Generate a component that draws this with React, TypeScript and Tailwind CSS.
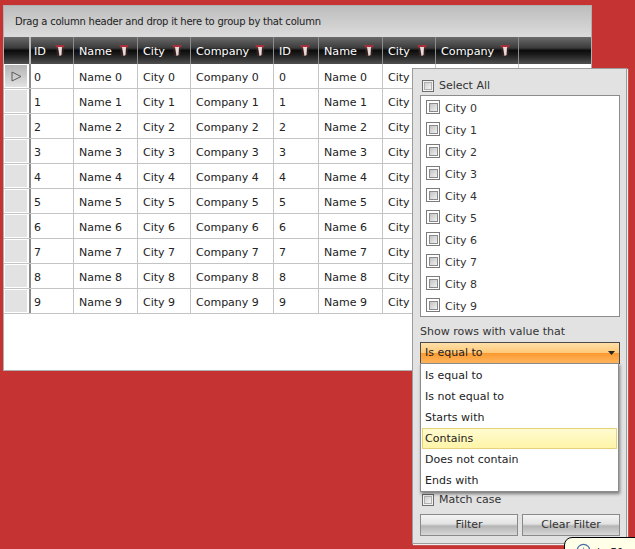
import { Info } from 'lucide-react'

const columns = [
  { title: 'ID', width: 'w-[43px]', pad: 'pl-[3px]', prefix: '' },
  { title: 'Name', width: 'w-[64px]', pad: 'pl-[5px]', prefix: 'Name ' },
  { title: 'City', width: 'w-[53px]', pad: 'pl-[5px]', prefix: 'City ' },
  { title: 'Company', width: 'w-[83px]', pad: 'pl-[5px]', prefix: 'Company ' },
  { title: 'ID', width: 'w-[45px]', pad: 'pl-[5px]', prefix: '' },
  { title: 'Name', width: 'w-[64px]', pad: 'pl-[5px]', prefix: 'Name ' },
  { title: 'City', width: 'w-[53px]', pad: 'pl-[5px]', prefix: 'City ' },
  { title: 'Company', width: 'w-[83px]', pad: 'pl-[5px]', prefix: 'Company ' },
]

const rows = [0, 1, 2, 3, 4, 5, 6, 7, 8, 9]
const operators = ['Is equal to', 'Is not equal to', 'Starts with', 'Contains', 'Does not contain', 'Ends with']

function FilterIcon() {
  return (
    <svg width="14" height="16" viewBox="0 0 14 16" className="shrink-0">
      <path d="M2 2 L12 2 L10 5 L4 5 Z" fill="#a8303c" />
      <path d="M3 5 L11 5 L10 13 L4 13 Z" fill="#5a2a2e" opacity="0.45" />
      <path d="M5 4 L9 4 L8.5 12 L6.5 13 Z" fill="#e6dcd8" />
    </svg>
  )
}

function Check() {
  return (
    <span className="flex h-[12px] w-[12px] shrink-0 items-center justify-center border border-[#6e6e6e] bg-[#f2f2f2]">
      <span className="h-[8px] w-[8px] border border-[#b0b0b0] bg-gradient-to-br from-[#cfcfcf] to-[#f4f4f4]" />
    </span>
  )
}

function ListCheck() {
  return (
    <span className="-mt-[2px] flex h-[14px] w-[14px] shrink-0 items-center justify-center border border-[#7a7a7a] bg-white">
      <span className="h-[9px] w-[9px] border border-[#8a8a8a] bg-gradient-to-br from-[#c4c4c4] to-[#f0f0f0]" />
    </span>
  )
}

function GradButton({ label }: { label: string }) {
  return (
    <div className="flex h-[22px] w-[98px] items-center justify-center border border-[#8a8a8a] bg-[linear-gradient(#f4f4f4_0%,#e2e2e2_45%,#b4b4b4_55%,#d8d8d8_100%)] text-[#333]">
      {label}
    </div>
  )
}

export default function App() {
  return (
    <div className="relative h-[549px] w-[635px] overflow-hidden bg-[#c53333] text-[11px] text-[#222] [font-family:'DejaVu_Sans',sans-serif]">
      <div className="ml-[3px] mt-[5px] flex h-[366px] w-[589px] flex-col border border-[#b0b0b0] bg-white">
        <div className="flex h-[31px] items-center bg-[linear-gradient(#bdbdbd,#dcdcdc)] pl-[11px] text-[10px] tracking-[-0.23px] text-[#222]">
          Drag a column header and drop it here to group by that column
        </div>

        <div className="flex h-[27px] bg-[linear-gradient(#6a6a6a_0%,#3c3c3c_40%,#0c0c0c_50%,#1c1c1c_65%,#505050_100%)] text-white">
          <div className="w-[27px] shrink-0 border-r-2 border-[#b8b8b8]" />
          {columns.map((col, i) => (
            <div key={i} className={`flex ${col.width} ${col.pad} shrink-0 items-center justify-between border-r border-[#8c8c8c] pr-[6px]`}>
              <span className="pt-[3px] text-[11.2px]">{col.title}</span>
              <FilterIcon />
            </div>
          ))}
        </div>

        {rows.map((n) => (
          <div key={n} className="flex h-[25px] border-b border-[#c4c4c4]">
            <div className="w-[27px] shrink-0 border-r-2 border-[#8c8c8c] pr-[1px]">
              <div className={`flex h-full items-center justify-center border border-white ${n === 0 ? 'bg-[linear-gradient(#b4b4b4,#e2e2e2)]' : 'bg-[#e2e2e2]'}`}>
                {n === 0 && (
                  <svg width="11" height="11" viewBox="0 0 11 11">
                    <path d="M1 1 L10 5.5 L1 10 Z" fill="none" stroke="#5a5a5a" />
                  </svg>
                )}
              </div>
            </div>
            {columns.map((col, i) => (
              <div key={i} className={`flex ${col.width} ${col.pad} shrink-0 items-center border-r border-[#c4c4c4] pt-[5px]`}>
                {col.prefix}
                {n}
              </div>
            ))}
          </div>
        ))}
      </div>

      {/* Filter popup */}
      <div className="absolute left-[412px] top-[68px] flex h-[476px] w-[215px] flex-col border border-[#9c9c9c] bg-[#e2e2e2] pl-[7px] pr-[6px] pt-[8px] text-[#333] shadow-[1px_1px_1px_#eee]">
        <div className="flex h-[17px] items-center gap-[5px] pl-[2px]">
          <Check />
          <span className="pt-[2px]">Select All</span>
        </div>
        <div className="mt-[1px] flex h-[222px] flex-col border border-[#8c8c8c] bg-white pl-[5px] pt-[1px]">
          {rows.map((n) => (
            <div key={n} className="flex h-[22px] shrink-0 items-center gap-[5px]">
              <ListCheck />
              <span className="pt-[2px]">City {n}</span>
            </div>
          ))}
        </div>
        <div className="mt-[6px] h-[17px] leading-[17px]">Show rows with value that</div>
        <div className="mt-[2px] flex h-[22px] items-center justify-between border border-[#4a4a4a] bg-[linear-gradient(#ffe0a8_0%,#ffc97a_48%,#fb9a32_52%,#ffb55c_100%)] px-[4px] text-[#222]">
          <span>Is equal to</span>
          <svg width="7" height="4" viewBox="0 0 7 4">
            <path d="M0 0 L7 0 L3.5 4 Z" fill="#222" />
          </svg>
        </div>
        <div className="mt-[128px] flex h-[15px] items-center gap-[5px] pl-[2px]">
          <Check />
          <span className="pt-[2px]">Match case</span>
        </div>
        <div className="mt-[7px] flex justify-between gap-[4px]">
          <GradButton label="Filter" />
          <GradButton label="Clear Filter" />
        </div>

        {/* Operator list */}
        <div className="absolute left-[7px] top-[294px] flex h-[129px] w-[199px] flex-col border border-[#8c8c8c] bg-white px-[1px] pt-[1px] text-[#222] shadow-[1px_2px_3px_rgba(0,0,0,0.45)]">
          {operators.map((op) => (
            <div key={op} className={`flex h-[21px] shrink-0 items-center pt-[2px] ${op === 'Contains' ? 'border border-[#e6d27a] bg-[linear-gradient(#fffbd0,#fff4a8)] pl-[2px]' : 'pl-[3px]'}`}>
              {op}
            </div>
          ))}
        </div>
      </div>

      {/* Tooltip peeking in at the bottom */}
      <div className="absolute left-[564px] top-[537px] flex h-[30px] w-[100px] items-start gap-[6px] rounded-[8px] border border-black bg-[#ffffe8] pl-[11px] pt-[5px]">
        <Info size={15} className="shrink-0 text-[#4a6fa8]" />
        <span className="pt-[2px]">lo 51</span>
      </div>
    </div>
  )
}
